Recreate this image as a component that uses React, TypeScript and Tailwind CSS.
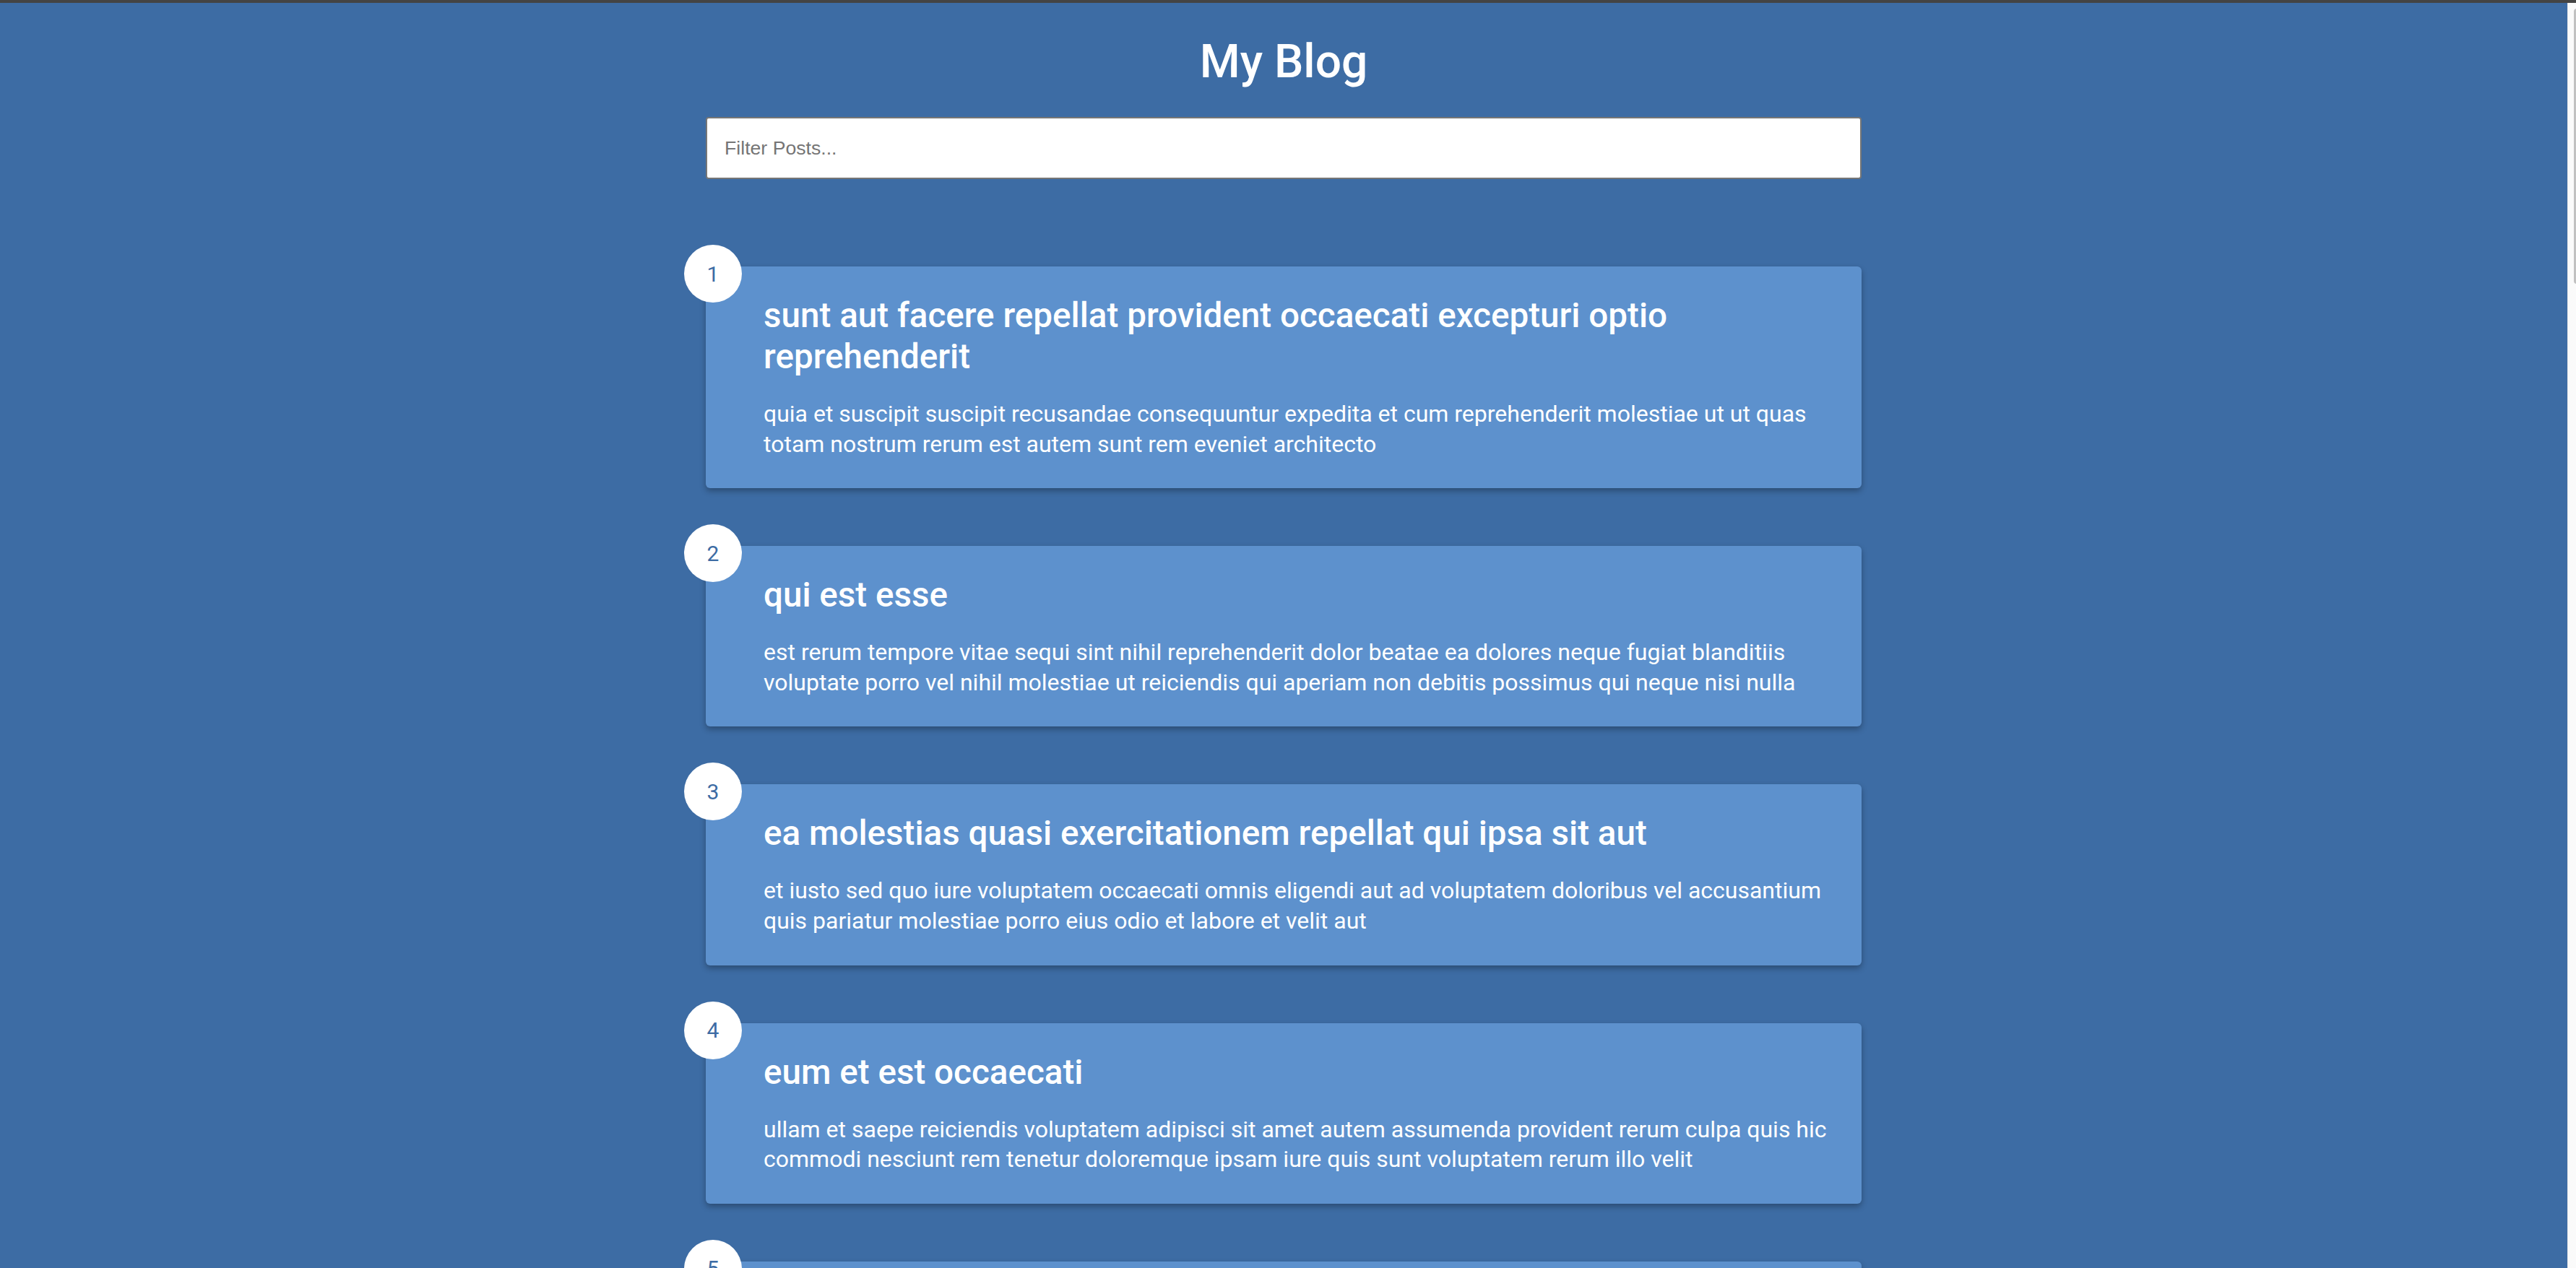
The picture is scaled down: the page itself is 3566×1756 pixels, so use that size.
import React from "react";

type Post = { id: number; title: string; body: string };

const posts: Post[] = [
  {
    id: 1,
    title:
      "sunt aut facere repellat provident occaecati excepturi optio reprehenderit",
    body: "quia et suscipit suscipit recusandae consequuntur expedita et cum reprehenderit molestiae ut ut quas totam nostrum rerum est autem sunt rem eveniet architecto",
  },
  {
    id: 2,
    title: "qui est esse",
    body: "est rerum tempore vitae sequi sint nihil reprehenderit dolor beatae ea dolores neque fugiat blanditiis voluptate porro vel nihil molestiae ut reiciendis qui aperiam non debitis possimus qui neque nisi nulla",
  },
  {
    id: 3,
    title: "ea molestias quasi exercitationem repellat qui ipsa sit aut",
    body: "et iusto sed quo iure voluptatem occaecati omnis eligendi aut ad voluptatem doloribus vel accusantium quis pariatur molestiae porro eius odio et labore et velit aut",
  },
  {
    id: 4,
    title: "eum et est occaecati",
    body: "ullam et saepe reiciendis voluptatem adipisci sit amet autem assumenda provident rerum culpa quis hic commodi nesciunt rem tenetur doloremque ipsam iure quis sunt voluptatem rerum illo velit",
  },
  {
    id: 5,
    title: "nesciunt quas odio",
    body: "repudiandae veniam quaerat sunt sed alias aut fugiat sit autem sed est voluptatem omnis possimus esse voluptatibus quis est aut tenetur dolor neque",
  },
];

const PostCard: React.FC<{ post: Post }> = ({ post }) => (
  <div className="relative flex w-[1600px] shrink-0 rounded-[6px] bg-[#5d91cd] p-[40px] shadow-[0_4px_8px_rgba(0,0,0,0.3)]">
    <div className="absolute -left-[30px] -top-[30px] flex h-[80px] w-[80px] items-center justify-center rounded-full bg-white text-[30px] text-[#3d6ca4]">
      {post.id}
    </div>
    <div className="ml-[40px]">
      <h2 className="m-0 text-[47.6px] font-medium leading-[57px]">{post.title}</h2>
      <p className="mt-[30px] text-[32px] leading-[41.6px]">{post.body}</p>
    </div>
  </div>
);

export default function App() {
  return (
    <div className="flex h-[1756px] flex-col overflow-hidden font-['Roboto',sans-serif] text-white">
      <div className="h-[4px] shrink-0 bg-[#444444]" />
      <div className="flex min-h-0 flex-1">
        <main className="flex min-w-0 flex-1 flex-col items-center overflow-hidden bg-[#3d6ca4]">
          <h1 className="mt-[44px] text-[64px] font-medium leading-[75px]">My Blog</h1>
          <div className="mt-[39px] w-[1600px] shrink-0">
            <input
              type="text"
              placeholder="Filter Posts..."
              className="h-[86px] w-full rounded-[4px] border-2 border-[#767676] bg-white pl-[24px] font-['Liberation_Sans',Arial,sans-serif] text-[26.67px] text-black placeholder:text-[#757575] outline-none"
            />
          </div>
          <div className="mt-[121px] flex flex-col gap-[80px]">
            {posts.map((p) => (
              <PostCard key={p.id} post={p} />
            ))}
          </div>
        </main>
        <div className="relative w-[12px] shrink-0 border-l border-[#e6e6e6] bg-[#fafafa]">
          <div className="absolute left-[8px] top-[8px] h-[381px] w-[8px] rounded-[4px] bg-[#c1c1c1]" />
        </div>
      </div>
    </div>
  );
}
